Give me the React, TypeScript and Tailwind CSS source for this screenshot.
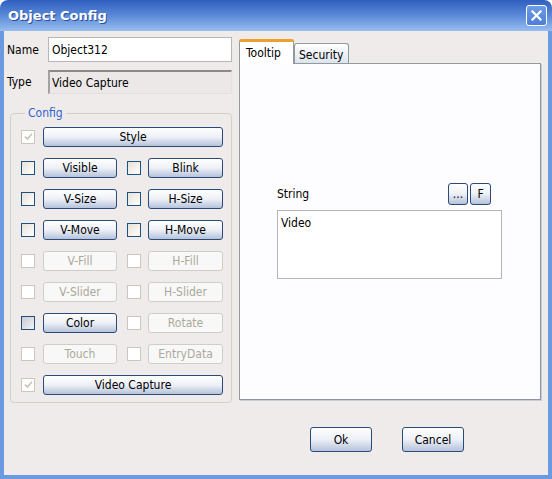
import React from 'react';

const font = { fontFamily: '"DejaVu Sans Condensed", "Liberation Sans", Arial, sans-serif' };

interface BtnProps {
  label: string;
  enabled?: boolean;
  className?: string;
}

const XpButton: React.FC<BtnProps> = ({ label, enabled = true, className = '' }) => (
  <div
    className={
      'flex items-center justify-center rounded-[3px] border text-[12px] leading-none ' +
      (enabled
        ? 'border-[#2c4a78] bg-gradient-to-b from-white via-[#edf0f6] to-[#b5c3dc] text-black '
        : 'border-[#cfcdc4] bg-[#f8f8f8] text-[#aca899] ') +
      className
    }
  >
    {label}
  </div>
);

const CheckBox: React.FC<{ enabled?: boolean; checked?: boolean; dark?: boolean }> = ({ enabled = true, checked = false, dark = false }) => (
  <div
    className={
      'flex h-[14px] w-[14px] shrink-0 items-center justify-center border ' +
      (enabled
        ? dark
          ? 'border-[#1c5180] bg-gradient-to-br from-[#c9cbd2] to-[#f3f3f3]'
          : 'border-[#1c5180] bg-gradient-to-br from-[#e6e2d8] to-white'
        : 'border-[#cac8bb] bg-white')
    }
  >
    {checked && (
      <svg width="9" height="9" viewBox="0 0 9 9">
        <path d="M1 4.5 L3.5 7 L8 1.8" fill="none" stroke="#c4c2b8" strokeWidth="1.6" />
      </svg>
    )}
  </div>
);

interface PairRow {
  a: string;
  aOn: boolean;
  b: string;
  bOn: boolean;
  aDark?: boolean;
}

const rows: PairRow[] = [
  { a: 'Visible', aOn: true, b: 'Blink', bOn: true },
  { a: 'V-Size', aOn: true, b: 'H-Size', bOn: true },
  { a: 'V-Move', aOn: true, b: 'H-Move', bOn: true },
  { a: 'V-Fill', aOn: false, b: 'H-Fill', bOn: false },
  { a: 'V-Slider', aOn: false, b: 'H-Slider', bOn: false },
  { a: 'Color', aOn: true, b: 'Rotate', bOn: false, aDark: true },
  { a: 'Touch', aOn: false, b: 'EntryData', bOn: false },
];

export default function App() {
  return (
    <div className="h-[479px] w-[552px] bg-white" style={font}>
      <div className="flex h-full w-full flex-col overflow-hidden rounded-t-[8px]">
        {/* title bar */}
        <div className="flex h-[31px] shrink-0 items-center justify-between bg-gradient-to-b from-[#2f5fc0] via-[#5a89d7] to-[#98beef] pl-[8px] pr-[5px]">
          <span
            className="text-[13px] font-bold text-white"
            style={{ fontFamily: '"DejaVu Sans", Verdana, sans-serif', textShadow: '1px 1px 0 #2a4f9a' }}
          >
            Object Config
          </span>
          <div className="flex h-[21px] w-[21px] items-center justify-center rounded-[3px] border border-white bg-gradient-to-b from-[#6f9be6] to-[#4d7fd6]">
            <svg width="11" height="11" viewBox="0 0 11 11">
              <path d="M1.5 1.5 L9.5 9.5 M9.5 1.5 L1.5 9.5" stroke="white" strokeWidth="2.2" strokeLinecap="square" />
            </svg>
          </div>
        </div>

        {/* body */}
        <div className="flex flex-1 flex-col border-x-4 border-b-4 border-[#6b9ae0] bg-[#efebeb]">
          <div className="flex h-[372px]">
            {/* left column */}
            <div className="flex w-[230px] flex-col pt-[6px]">
              <div className="flex h-[25px] items-center">
                <span className="w-[44px] overflow-hidden whitespace-nowrap pl-[3px] text-[12px] text-black">Name</span>
                <div className="flex h-[25px] w-[184px] items-center border border-[#b7b7b7] bg-white pl-[3px] text-[12px]">
                  Object312
                </div>
              </div>
              <div className="mt-[8px] flex h-[24px] items-center">
                <span className="w-[44px] pl-[3px] text-[12px] text-black">Type</span>
                <div className="flex h-[24px] w-[184px] items-center border-t-2 border-l-2 border-r border-b border-t-[#8a8a8a] border-l-[#a3a3a3] border-r-[#e2e0e0] border-b-[#e2e0e0] bg-[#ece8e8] pl-[2px] text-[12px]">
                  Video Capture
                </div>
              </div>
              <fieldset className="ml-[6px] mt-[12px] h-[297px] w-[222px] rounded-[4px] border border-[#d3d0c6] pl-[10px] pt-[1px]">
                <legend className="ml-[4px] px-[3px] text-[12px] leading-[14px] text-[#2f63cf]">Config</legend>
                <div className="flex h-[31px] items-center">
                  <CheckBox enabled={false} checked />
                  <XpButton label="Style" className="ml-[8px] h-[20px] w-[180px]" />
                </div>
                {rows.map((r) => (
                  <div key={r.a} className="flex h-[31px] items-center">
                    <CheckBox enabled={r.aOn} dark={r.aDark} />
                    <XpButton label={r.a} enabled={r.aOn} className="ml-[8px] h-[20px] w-[74px]" />
                    <div className="ml-[10px]">
                      <CheckBox enabled={r.bOn} />
                    </div>
                    <XpButton label={r.b} enabled={r.bOn} className="ml-[7px] h-[20px] w-[75px]" />
                  </div>
                ))}
                <div className="flex h-[31px] items-center">
                  <CheckBox enabled={false} checked />
                  <XpButton label="Video Capture" className="ml-[8px] h-[20px] w-[180px]" />
                </div>
              </fieldset>
            </div>

            {/* right tab panel */}
            <div className="ml-[5px] flex w-[302px] flex-col pt-[8px]">
              <div className="flex h-[24px] items-end">
                <div className="relative z-10 -mb-px flex h-[25px] w-[55px] items-center rounded-t-[3px] border-x border-[#919b9c] bg-white pl-[6px] pt-[2px] text-[12px]">
                  <div className="absolute -left-px -right-px top-0 h-[3px] rounded-t-[3px] bg-[#f0a030]" />
                  Tooltip
                </div>
                <div className="flex h-[20px] w-[55px] items-center rounded-t-[3px] border border-b-0 border-[#919b9c] bg-gradient-to-b from-white to-[#dde4ee] pl-[4px] pt-[2px] text-[12px]">
                  Security
                </div>
              </div>
              <div className="flex h-[337px] flex-col border border-[#919b9c] border-r-[#8a96a6] border-b-[#8a96a6] bg-[#fdfcfe] pl-[37px] pt-[119px] shadow-[1px_1px_0_#c8cdd8]">
                <div className="flex h-[22px] w-[214px] items-end justify-between">
                  <span className="mb-[2px] text-[12px]">String</span>
                  <div className="flex gap-[2px]">
                    <XpButton label="..." className="h-[22px] w-[20px]" />
                    <XpButton label="F" className="h-[22px] w-[21px]" />
                  </div>
                </div>
                <div className="mt-[5px] h-[69px] w-[225px] border border-[#b5b5b5] bg-white pl-[3px] pt-[3px] text-[12px]">
                  Video
                </div>
              </div>
            </div>
          </div>

          {/* bottom buttons */}
          <div className="mt-[24px] flex">
            <XpButton label="Ok" className="ml-[306px] h-[25px] w-[62px]" />
            <XpButton label="Cancel" className="ml-[30px] h-[25px] w-[62px]" />
          </div>
        </div>
      </div>
    </div>
  );
}
